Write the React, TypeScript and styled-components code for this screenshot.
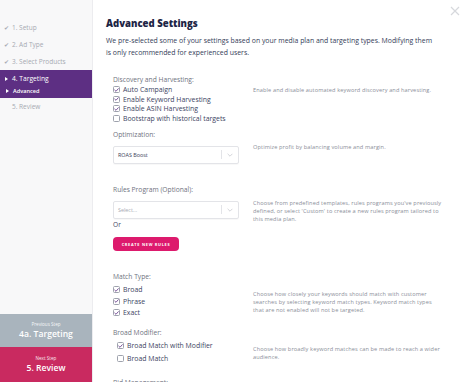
import React from 'react';
import styled, { createGlobalStyle } from 'styled-components';

const GlobalStyle = createGlobalStyle`
  html, body { margin: 0; padding: 0; background: #fff; }
  body { font-family: "Open Sans", "Liberation Sans", sans-serif; }
  * { box-sizing: border-box; }
`;

const Page = styled.div`
  display: flex;
  width: 465px;
  height: 382px;
  overflow: hidden;
`;

const Sidebar = styled.aside`
  width: 93px;
  flex-shrink: 0;
  display: flex;
  flex-direction: column;
  background: #f8f8f9;
  border-right: 1px solid #ececef;
  padding-top: 19px;
`;

const Steps = styled.ul`
  list-style: none;
  margin: 0;
  padding: 0;
  display: flex;
  flex-direction: column;
`;

const Step = styled.li<{ $done?: boolean }>`
  display: flex;
  align-items: center;
  gap: 3px;
  height: 17px;
  padding-left: ${({ $done }) => ($done ? '4px' : '12px')};
  font-size: 6.5px;
  color: #a6aab2;
`;

const Check = styled.span`
  font-size: 6px;
  color: #a6aab2;
`;

const Active = styled.li`
  background: #5d2f83;
  padding: 3px 0 3px 5px;
  display: flex;
  flex-direction: column;
  gap: 2px;
  color: #fff;
`;

const ActiveRow = styled.div<{ $sub?: boolean }>`
  display: flex;
  align-items: center;
  gap: 4px;
  font-size: ${({ $sub }) => ($sub ? '5.6px' : '6.7px')};
  font-weight: ${({ $sub }) => ($sub ? 600 : 400)};
  padding-left: ${({ $sub }) => ($sub ? '1px' : '0')};
  height: ${({ $sub }) => ($sub ? '9px' : '11px')};

  &::before {
    content: '';
    border-left: 3px solid #fff;
    border-top: 2px solid transparent;
    border-bottom: 2px solid transparent;
    width: 0;
    height: 0;
  }
`;

const Footer = styled.div`
  margin-top: auto;
  display: flex;
  flex-direction: column;
`;

const FooterBox = styled.div<{ $bg: string; $h: number }>`
  background: ${({ $bg }) => $bg};
  height: ${({ $h }) => $h}px;
  display: flex;
  flex-direction: column;
  align-items: center;
  justify-content: center;
  color: #fff;
  gap: 1px;
`;

const FooterSmall = styled.div`
  font-size: 4.6px;
  opacity: 0.9;
`;

const FooterBig = styled.div`
  font-size: 8.6px;
  font-weight: 600;
`;

const Main = styled.main`
  flex: 1;
  position: relative;
  padding: 16px 0 0 13px;
  overflow: hidden;
  color: #222a44;
`;

const Close = styled.button`
  position: absolute;
  top: 5px;
  right: 4px;
  border: none;
  background: none;
  padding: 0;
  width: 12px;
  height: 12px;
  cursor: pointer;
`;

const Title = styled.h1`
  margin: 0;
  font-size: 9.6px;
  font-weight: 800;
  color: #1d2545;
  line-height: 15px;
`;

const Intro = styled.p`
  margin: 4px 0 0;
  font-size: 6.9px;
  line-height: 11.5px;
  color: #343c58;
  width: 328px;
`;

const Section = styled.section<{ $top: number }>`
  margin-top: ${({ $top }) => $top}px;
  padding-left: 7px;
`;

const Label = styled.div`
  font-size: 6.7px;
  color: #6f7380;
  line-height: 10px;
`;

const Row = styled.div`
  display: grid;
  grid-template-columns: 140px 205px;
  align-items: start;
`;

const Options = styled.div<{ $indent?: number; $gap: number }>`
  display: flex;
  flex-direction: column;
  gap: ${({ $gap }) => $gap}px;
  padding-left: ${({ $indent }) => $indent || 0}px;
`;

const Option = styled.label`
  display: flex;
  align-items: center;
  gap: 3px;
  font-size: 6.9px;
  line-height: 9px;
  color: #3c4462;
`;

const Box = styled.span`
  width: 7px;
  height: 7px;
  border: 0.8px solid #9ea2ad;
  border-radius: 1.5px;
  display: inline-flex;
  align-items: center;
  justify-content: center;
  background: #fff;
`;

const Desc = styled.div<{ $top?: number }>`
  margin-top: ${({ $top }) => $top || 0}px;
  font-size: 5.6px;
  letter-spacing: 0.12px;
  line-height: 8px;
  color: #8a8e99;
`;

const Select = styled.div`
  margin-top: 6px;
  width: 126px;
  height: 18px;
  border: 0.8px solid #e3e4e8;
  border-radius: 2px;
  display: flex;
  align-items: center;
  padding-left: 4px;
  font-size: 5.4px;
  box-shadow: 0 1px 1px rgba(0, 0, 0, 0.03);
`;

const SelectText = styled.span<{ $placeholder?: boolean }>`
  flex: 1;
  color: ${({ $placeholder }) => ($placeholder ? '#a6a9b2' : '#3a4058')};
`;

const SelectDivider = styled.span`
  width: 0.8px;
  height: 9px;
  background: #e3e4e8;
`;

const Caret = styled.span`
  width: 16px;
  display: flex;
  align-items: center;
  justify-content: center;
`;

const Or = styled.div`
  margin-top: -3px;
  font-size: 6.6px;
  color: #3c4462;
`;

const PinkButton = styled.button`
  margin-top: 6px;
  height: 14px;
  width: 66px;
  border: none;
  border-radius: 4px;
  background: #dd1a6d;
  color: #fff;
  font-family: inherit;
  font-size: 3.9px;
  font-weight: 700;
  letter-spacing: 0.7px;
  padding: 0;
`;

const Tick = () => (
  <svg width="6" height="6" viewBox="0 0 10 10">
    <path d="M1.5 5.2 L4 7.6 L8.6 2.4" fill="none" stroke="#5a2c82" strokeWidth="1.6" strokeLinecap="round" strokeLinejoin="round" />
  </svg>
);

const Checkbox = ({ checked, children }: { checked?: boolean; children: React.ReactNode }) => (
  <Option>
    <Box>{checked && <Tick />}</Box>
    {children}
  </Option>
);

const Chevron = () => (
  <svg width="6" height="4" viewBox="0 0 10 6">
    <path d="M1 1 L5 5 L9 1" fill="none" stroke="#c3c5cc" strokeWidth="1.2" />
  </svg>
);

export default function App() {
  return (
    <>
      <GlobalStyle />
      <Page>
        <Sidebar>
          <Steps>
            <Step $done><Check>✔</Check>1. Setup</Step>
            <Step $done><Check>✔</Check>2. Ad Type</Step>
            <Step $done><Check>✔</Check>3. Select Products</Step>
            <Active>
              <ActiveRow>4. Targeting</ActiveRow>
              <ActiveRow $sub>Advanced</ActiveRow>
            </Active>
            <Step>5. Review</Step>
          </Steps>
          <Footer>
            <FooterBox $bg="#a9b4bd" $h={33}>
              <FooterSmall>Previous Step</FooterSmall>
              <FooterBig>4a. Targeting</FooterBig>
            </FooterBox>
            <FooterBox $bg="#c92a60" $h={35}>
              <FooterSmall>Next Step</FooterSmall>
              <FooterBig>5. Review</FooterBig>
            </FooterBox>
          </Footer>
        </Sidebar>
        <Main>
          <Close aria-label="close">
            <svg width="12" height="12" viewBox="0 0 12 12">
              <path d="M2 2 L10 10 M10 2 L2 10" stroke="#d6d8dc" strokeWidth="1.2" />
            </svg>
          </Close>
          <Title>Advanced Settings</Title>
          <Intro>
            We pre-selected some of your settings based on your media plan and targeting types. Modifying them
            is only recommended for experienced users.
          </Intro>

          <Section $top={17}>
            <Label>Discovery and Harvesting:</Label>
            <Row>
              <Options $gap={0.5}>
                <Checkbox checked>Auto Campaign</Checkbox>
                <Checkbox checked>Enable Keyword Harvesting</Checkbox>
                <Checkbox checked>Enable ASIN Harvesting</Checkbox>
                <Checkbox>Bootstrap with historical targets</Checkbox>
              </Options>
              <Desc $top={1}>Enable and disable automated keyword discovery and harvesting.</Desc>
            </Row>
          </Section>

          <Section $top={7}>
            <Label>Optimization:</Label>
            <Row>
              <Select>
                <SelectText>ROAS Boost</SelectText>
                <SelectDivider />
                <Caret><Chevron /></Caret>
              </Select>
              <Desc $top={3}>Optimize profit by balancing volume and margin.</Desc>
            </Row>
          </Section>

          <Section $top={21}>
            <Label>Rules Program (Optional):</Label>
            <Row>
              <Select>
                <SelectText $placeholder>Select...</SelectText>
                <SelectDivider />
                <Caret><Chevron /></Caret>
              </Select>
              <Desc $top={4}>
                Choose from predefined templates, rules programs you've previously
                <br />
                defined, or select 'Custom' to create a new rules program tailored to
                <br />
                this media plan.
              </Desc>
            </Row>
            <Or>Or</Or>
            <PinkButton>CREATE NEW RULES</PinkButton>
          </Section>

          <Section $top={21}>
            <Label>Match Type:</Label>
            <Row>
              <Options $gap={2.5} style={{ marginTop: 3 }}>
                <Checkbox checked>Broad</Checkbox>
                <Checkbox checked>Phrase</Checkbox>
                <Checkbox checked>Exact</Checkbox>
              </Options>
              <Desc $top={8}>
                Choose how closely your keywords should match with customer
                <br />
                searches by selecting keyword match types. Keyword match types
                <br />
                that are not enabled will not be targeted.
              </Desc>
            </Row>
          </Section>

          <Section $top={11}>
            <Label>Broad Modifier:</Label>
            <Row>
              <Options $gap={4} $indent={4} style={{ marginTop: 3 }}>
                <Checkbox checked>Broad Match with Modifier</Checkbox>
                <Checkbox>Broad Match</Checkbox>
              </Options>
              <Desc $top={7}>
                Choose how broadly keyword matches can be made to reach a wider
                <br />
                audience.
              </Desc>
            </Row>
          </Section>

          <Section $top={15}>
            <Label>Bid Management:</Label>
          </Section>
        </Main>
      </Page>
    </>
  );
}
